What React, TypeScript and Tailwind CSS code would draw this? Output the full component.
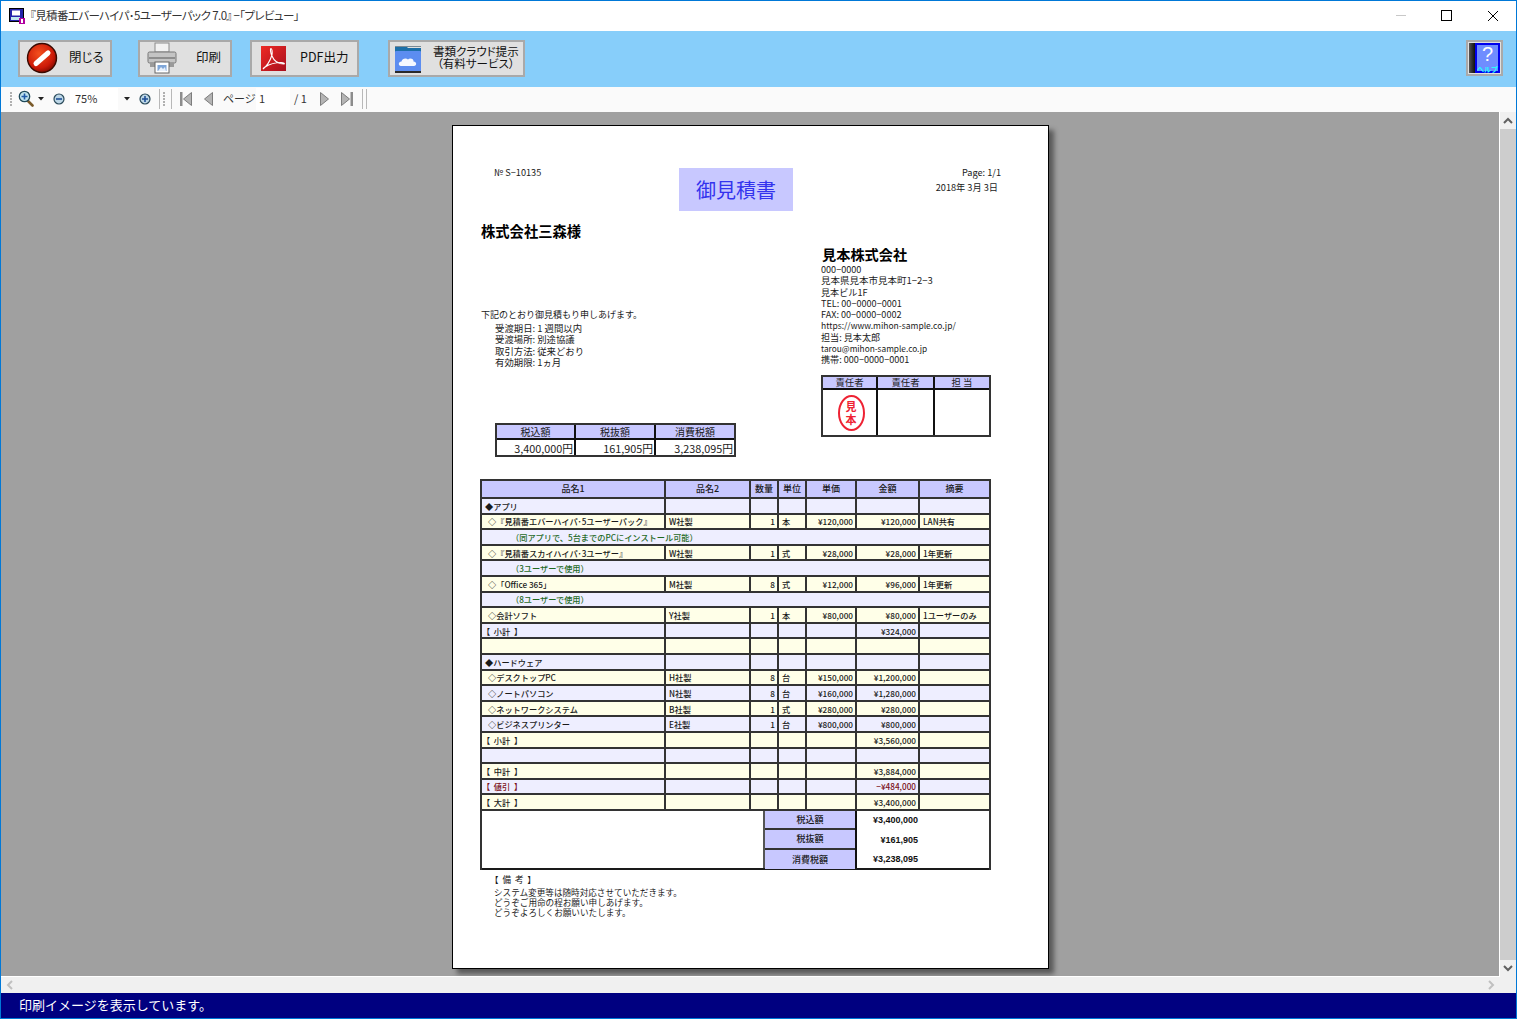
import React from "react";

const FONT = "font-['Noto_Sans_CJK_JP','Noto_Sans',sans-serif]";
const PALT = "[font-feature-settings:'palt']";
const WIDTHS = ["w-[184px]", "w-[85px]", "w-[28px]", "w-[28px]", "w-[50px]", "w-[63px]", "w-[69px]"];

type Row = {
  c: string[];
  tone: "l" | "y";
  note?: boolean;
  red?: boolean;
};

const rows: Row[] = [
  { c: ["◆アプリ", "", "", "", "", "", ""], tone: "l" },
  { c: ["◇『見積番エバーハイパ･5ユーザーパック』", "W社製", "1", "本", "¥120,000", "¥120,000", "LAN共有"], tone: "y" },
  { c: ["（同アプリで、5台までのPCにインストール可能）"], tone: "l", note: true },
  { c: ["◇『見積番スカイハイパ･3ユーザー』", "W社製", "1", "式", "¥28,000", "¥28,000", "1年更新"], tone: "y" },
  { c: ["（3ユーザーで使用）"], tone: "l", note: true },
  { c: ["◇「Office 365」", "M社製", "8", "式", "¥12,000", "¥96,000", "1年更新"], tone: "y" },
  { c: ["（8ユーザーで使用）"], tone: "l", note: true },
  { c: ["◇会計ソフト", "Y社製", "1", "本", "¥80,000", "¥80,000", "1ユーザーのみ"], tone: "y" },
  { c: ["【  小計  】", "", "", "", "", "¥324,000", ""], tone: "l" },
  { c: ["", "", "", "", "", "", ""], tone: "y" },
  { c: ["◆ハードウェア", "", "", "", "", "", ""], tone: "l" },
  { c: ["◇デスクトップPC", "H社製", "8", "台", "¥150,000", "¥1,200,000", ""], tone: "y" },
  { c: ["◇ノートパソコン", "N社製", "8", "台", "¥160,000", "¥1,280,000", ""], tone: "l" },
  { c: ["◇ネットワークシステム", "B社製", "1", "式", "¥280,000", "¥280,000", ""], tone: "y" },
  { c: ["◇ビジネスプリンター", "E社製", "1", "台", "¥800,000", "¥800,000", ""], tone: "l" },
  { c: ["【  小計  】", "", "", "", "", "¥3,560,000", ""], tone: "y" },
  { c: ["", "", "", "", "", "", ""], tone: "l" },
  { c: ["【  中計  】", "", "", "", "", "¥3,884,000", ""], tone: "y" },
  { c: ["【  値引  】", "", "", "", "", "−¥484,000", ""], tone: "l", red: true },
  { c: ["【  大計  】", "", "", "", "", "¥3,400,000", ""], tone: "y" },
];

const CloseIcon = () => (
  <svg width="32" height="32" viewBox="0 0 32 32">
    <defs>
      <radialGradient id="cl" cx="40%" cy="35%" r="70%">
        <stop offset="0%" stopColor="#f4501e" />
        <stop offset="70%" stopColor="#cc1a08" />
        <stop offset="100%" stopColor="#7a0a00" />
      </radialGradient>
    </defs>
    <circle cx="16" cy="16" r="14.5" fill="url(#cl)" stroke="#3a0a00" strokeWidth="1.4" />
    <path d="M10 21.5 L22 11" stroke="#fff" strokeWidth="5" strokeLinecap="round" />
  </svg>
);

const PrinterIcon = () => (
  <svg width="30" height="32" viewBox="0 0 30 32">
    <rect x="8" y="1" width="14" height="9" fill="#f2f2f2" stroke="#8a8a8a" />
    <rect x="1" y="10" width="28" height="11" rx="1.5" fill="#c4c4c4" stroke="#777" />
    <rect x="2" y="15" width="26" height="2" fill="#8e8e8e" />
    <rect x="3" y="21" width="24" height="4" fill="#9a9a9a" />
    <rect x="8" y="20" width="14" height="11" fill="#fff" stroke="#666" />
    <rect x="10.5" y="23" width="9" height="6" fill="#7fa6d8" />
    <path d="M11 29 L14 25 L16 27 L18 25 L19 29 Z" fill="#e8f0fa" />
  </svg>
);

const PdfIcon = () => (
  <svg width="25" height="25" viewBox="0 0 25 25">
    <defs>
      <linearGradient id="pd" x1="0" y1="0" x2="1" y2="1">
        <stop offset="0%" stopColor="#ee2a24" />
        <stop offset="100%" stopColor="#a80f1e" />
      </linearGradient>
    </defs>
    <rect width="25" height="25" fill="url(#pd)" />
    <path
      d="M2 23 C6 20 9 15 11 9 C11.5 6 11 2.5 10 2.5 C9 2.5 9.5 7 11 10 C13 15 17 18 23 18 C24 18 23 16.5 20 16.5 C14 16.5 8 18.5 4 21 C2.5 22 2 23 2 23 Z"
      fill="none"
      stroke="#fff"
      strokeWidth="1.1"
    />
  </svg>
);

const CloudFolderIcon = () => (
  <svg width="26" height="29" viewBox="0 0 26 29">
    <path d="M0 2 H11 L13 4 H26 V9 H0 Z" fill="#1c6fa8" />
    <rect x="0" y="2" width="26" height="1" fill="#7a8a95" />
    <rect x="0" y="7" width="26" height="22" rx="1" fill="#5c8df0" />
    <rect x="0" y="27" width="26" height="2" fill="#2a2a2a" />
    <path
      d="M6 22 C3 22 3 17.5 6.5 17.5 C7 14.5 11 13.5 13 15.5 C15 13.5 19 15 18.5 17.5 C22 17.5 22 22 19 22 Z"
      fill="#f4f8ff"
    />
  </svg>
);

const HelpIcon = () => (
  <div className="relative flex h-[36px] w-[37px] items-center justify-center border-2 border-[#a9a9a9] bg-[#e0e0e0]">
    <div className="flex h-[30px] w-[31px]">
      <div className="w-[6px] bg-gradient-to-r from-[#555555] to-[#111111]" />
      <div className="relative flex-1 border-2 border-[#0000ee] bg-[#6f8dff]">
        <span className="absolute left-0 right-0 top-[-3px] text-center font-['Liberation_Sans',sans-serif] text-[20px] leading-[24px] text-white">?</span>
        <span className={`absolute bottom-[-2px] left-0 right-0 text-center text-[7px] font-bold leading-[8px] text-[#22ffff] ${FONT}`}>ヘルプ</span>
      </div>
    </div>
  </div>
);

const Caret = ({ className = "" }: { className?: string }) => (
  <svg width="6" height="4" viewBox="0 0 6 4" className={className}>
    <path d="M0 0 H6 L3 3.5 Z" fill="#222" />
  </svg>
);

const Grip = ({ className = "" }: { className?: string }) => (
  <div className={`flex flex-col gap-[1px] ${className}`}>
    {[0, 1, 2, 3, 4].map((i) => (
      <span key={i} className="h-[2px] w-[2px] bg-[#b0b0b0]" />
    ))}
  </div>
);

const Sep = ({ className = "" }: { className?: string }) => (
  <span className={`h-[20px] w-[1px] bg-[#b8b8b8] ${className}`} />
);

const Magnifier = () => (
  <svg width="16" height="17" viewBox="0 0 16 17">
    <path d="M9.5 10.5 L14.5 15.5" stroke="#7a5a2a" strokeWidth="2.6" strokeLinecap="round" />
    <circle cx="6.5" cy="6.5" r="5.2" fill="#bfe3ee" stroke="#1f4a5a" strokeWidth="1.3" />
    <path d="M3.5 6.5 H9.5 M6.5 3.5 V9.5" stroke="#1f5aa8" strokeWidth="1.6" />
  </svg>
);

const RoundBtn = ({ plus }: { plus?: boolean }) => (
  <svg width="12" height="12" viewBox="0 0 12 12">
    <circle cx="6" cy="6" r="5" fill="#bcd6e6" stroke="#2a4a5a" strokeWidth="1.2" />
    <path d={plus ? "M3 6 H9 M6 3 V9" : "M3 6 H9"} stroke="#1f4f96" strokeWidth="1.6" />
  </svg>
);

const Arrow = ({ dir, bar }: { dir: "l" | "r"; bar?: boolean }) => (
  <svg width={bar ? 12 : 9} height="14" viewBox={bar ? "0 0 12 14" : "0 0 9 14"}>
    {dir === "l" ? (
      bar ? (
        <>
          <rect x="0" y="0" width="2.5" height="14" fill="#8c8c8c" />
          <path d="M11.5 0.5 V13.5 L3.5 7 Z" fill="#b4b4b4" stroke="#7c7c7c" />
        </>
      ) : (
        <path d="M8.5 0.5 V13.5 L0.5 7 Z" fill="#b4b4b4" stroke="#7c7c7c" />
      )
    ) : bar ? (
      <>
        <rect x="9.5" y="0" width="2.5" height="14" fill="#8c8c8c" />
        <path d="M0.5 0.5 V13.5 L8.5 7 Z" fill="#b4b4b4" stroke="#7c7c7c" />
      </>
    ) : (
      <path d="M0.5 0.5 V13.5 L8.5 7 Z" fill="#b4b4b4" stroke="#7c7c7c" />
    )}
  </svg>
);

const ToolButton = ({ width, icon, children, textLeft }: { width: string; icon: React.ReactNode; children: React.ReactNode; textLeft: string }) => (
  <div className={`flex h-[37px] items-center border-2 border-[#a9a9a9] bg-[#e0e0e0] ${width}`}>
    {icon}
    <div className={`pb-[2px] leading-[12px] text-[#111] ${PALT} ${textLeft}`}>{children}</div>
  </div>
);

const TableRow = ({ row }: { row: Row }) => {
  const bg = row.tone === "l" ? "bg-[#eeeeff]" : "bg-[#ffffe8]";
  if (row.note) {
    return (
      <div className={`flex h-[15.6px] items-center border-b-2 border-[#333] pl-[29px] text-[8.2px] font-medium leading-[10px] text-[#1f6a1f] ${bg}`}>
        {row.c[0]}
      </div>
    );
  }
  return (
    <div className={`flex h-[15.6px] border-b-2 border-[#333] text-[8.2px] font-medium leading-[10px] ${bg}`}>
      {row.c.map((t, i) => {
        const right = i === 2 || i === 4 || i === 5;
        const red = row.red && (i === 0 || i === 5);
        let pad = "pl-[3px]";
        if (right) pad = "justify-end pr-[2px]";
        else if (i === 0) pad = t.startsWith("◇") ? "pl-[6px]" : t.startsWith("◆") ? "pl-[3px]" : "pl-0";
        return (
          <div
            key={i}
            className={`flex items-center overflow-hidden whitespace-pre border-[#333] ${i < 6 ? "border-r-2" : ""} ${WIDTHS[i]} ${pad} ${red ? "text-[#7a1020]" : "text-[#1a1a1a]"}`}
          >
            {t}
          </div>
        );
      })}
    </div>
  );
};

const App = () => {
  return (
    <div className={`flex h-[1019px] w-[1517px] flex-col overflow-hidden border border-[#0078d7] bg-white ${FONT}`}>
      {/* title bar */}
      <div className="flex h-[30px] shrink-0 items-center bg-white pb-[1px]">
        <svg width="16" height="16" viewBox="0 0 16 16" className="ml-[8px]">
          <rect width="14" height="13" x="0.5" y="0.5" fill="#2222aa" stroke="#000" />
          <rect x="3" y="2.5" width="8" height="5" fill="#fff" />
          <rect x="2" y="9" width="9" height="3" fill="#bfe6ee" />
          <rect x="10" y="10" width="6" height="6" fill="#b000a0" />
          <rect x="12" y="11" width="2" height="4" fill="#fff" />
        </svg>
        <span className={`ml-[5px] text-[11.5px] tracking-[-0.6px] text-[#333] ${PALT}`}>『見積番エバーハイパ･5ユーザーパック 7.0』 −「プレビュー」</span>
        <div className="ml-auto flex items-center">
          <span className="mr-[35px] h-[1px] w-[10px] bg-[#c8c8c8]" />
          <span className="mr-[35px] h-[11px] w-[11px] border-[1.5px] border-black" />
          <svg width="12" height="12" viewBox="0 0 12 12" className="mr-[17px]">
            <path d="M1 1 L11 11 M11 1 L1 11" stroke="#000" strokeWidth="1" />
          </svg>
        </div>
      </div>

      {/* button bar */}
      <div className="flex h-[56px] shrink-0 items-center bg-[#87cefa] pb-[2px] pl-[17px]">
        <ToolButton width="w-[94px]" icon={<div className="ml-[6px]"><CloseIcon /></div>} textLeft="ml-[11px] text-[12.5px]">閉じる</ToolButton>
        <div className="ml-[26px]">
          <ToolButton width="w-[94px]" icon={<div className="ml-[7px]"><PrinterIcon /></div>} textLeft="ml-[19px] text-[12.5px]">印刷</ToolButton>
        </div>
        <div className="ml-[18px]">
          <ToolButton width="w-[109px]" icon={<div className="ml-[9px]"><PdfIcon /></div>} textLeft="ml-[14px] text-[12.5px]">PDF出力</ToolButton>
        </div>
        <div className="ml-[29px]">
          <ToolButton
            width="w-[137px]"
            icon={<div className="ml-[5px]"><CloudFolderIcon /></div>}
            textLeft="ml-[12px] text-center text-[11.5px]"
          >
            <div className="whitespace-nowrap leading-[12px]">書類クラウド提示</div>
            <div className="whitespace-nowrap leading-[12px]">（有料サービス）</div>
          </ToolButton>
        </div>
        <div className="ml-auto mr-[13px]">
          <HelpIcon />
        </div>
      </div>

      {/* preview strip */}
      <div className={`flex h-[25px] shrink-0 items-center bg-[#fafafa] pb-[2px] text-[11px] text-[#333] ${PALT}`}>
        <Grip className="ml-[9px]" />
        <div className="ml-[6px]"><Magnifier /></div>
        <Caret className="ml-[4px]" />
        <div className="ml-[9px]"><RoundBtn /></div>
        <div className="ml-[5px] flex h-[22px] w-[48px] items-center bg-white pl-[5px]">75%</div>
        <Caret className="ml-[6px]" />
        <div className="ml-[9px]"><RoundBtn plus /></div>
        <Sep className="ml-[8px]" />
        <Grip className="ml-[3px]" />
        <Sep className="ml-[6px]" />
        <div className="ml-[8px]"><Arrow dir="l" bar /></div>
        <div className="ml-[12px]"><Arrow dir="l" /></div>
        <span className="ml-[10px] w-[29px] whitespace-nowrap">ページ</span>
        <div className="ml-[4px] flex h-[22px] w-[34px] items-center bg-white pl-[3px]">1</div>
        <span className="ml-[4px] w-[13px] whitespace-nowrap">/ 1</span>
        <div className="ml-[13px]"><Arrow dir="r" /></div>
        <div className="ml-[12px]"><Arrow dir="r" bar /></div>
        <Sep className="ml-[9px]" />
        <Sep className="ml-[3px]" />
      </div>

      {/* preview area */}
      <div className="flex min-h-0 flex-1">
        <div className="flex-1 overflow-hidden border-b border-r border-white bg-[#a0a0a0] pl-[451px] pt-[13px]">
          <div className="h-[844px] w-[597px] border border-black bg-white shadow-[5px_5px_5px_rgba(0,0,0,0.45)]">
            {/* header row */}
            <div className="mt-[42px] flex h-[43px] text-[9.2px] leading-[10px] text-[#1a1a1a]">
              <div className="ml-[41px] w-[185px] -translate-y-[1px]">№ S−10135</div>
              <div className="flex w-[114px] items-center justify-center bg-[#c8c8ff] text-[20px] leading-[24px] text-[#3333ee]">御見積書</div>
              <div className="flex-1 -translate-y-[1px] pr-[47px] text-right">
                <div>Page: 1/1</div>
                <div className="mt-[5px] pr-[3px]">2018年 3月 3日</div>
              </div>
            </div>

            {/* address + summary */}
            <div className="ml-[28px] flex h-[268px] text-[#1a1a1a]">
              <div className="w-[340px]">
                <div className="mt-[12px] whitespace-nowrap text-[14.3px] font-bold leading-[16px] text-black">株式会社三森様</div>
                <div className="mt-[70px] text-[9px] leading-[11px]">下記のとおり御見積もり申しあげます。</div>
                <div className="ml-[14px] mt-[3px] text-[9.4px] leading-[11.4px]">
                  <div>受渡期日: 1 週間以内</div>
                  <div>受渡場所: 別途協議</div>
                  <div>取引方法: 従来どおり</div>
                  <div>有効期限: 1ヵ月</div>
                </div>
                <div className="ml-[14px] mt-[54px] w-[241px] border-2 border-[#333]">
                  <div className="flex h-[15px] border-b-2 border-[#111] bg-[#c8c8ff] text-center text-[10px] leading-[14px]">
                    <div className="w-[79px] border-r-2 border-[#111]">税込額</div>
                    <div className="w-[80px] border-r-2 border-[#111]">税抜額</div>
                    <div className="flex-1">消費税額</div>
                  </div>
                  <div className="flex h-[15px] text-right text-[10.8px] leading-[16px]">
                    <div className="w-[79px] border-r-2 border-[#111] pr-[1px]">3,400,000円</div>
                    <div className="w-[80px] border-r-2 border-[#111] pr-[1px]">161,905円</div>
                    <div className="flex-1 pr-[1px]">3,238,095円</div>
                  </div>
                </div>
              </div>
              <div className="w-[170px]">
                <div className="ml-[1px] mt-[35px] whitespace-nowrap text-[14.2px] font-bold leading-[16px] text-black">見本株式会社</div>
                <div className="mt-[2px] text-[9.1px] leading-[11.25px]">
                  <div>000−0000</div>
                  <div className="text-[9.5px]">見本県見本市見本町1−2−3</div>
                  <div>見本ビル1F</div>
                  <div>TEL: 00−0000−0001</div>
                  <div>FAX: 00−0000−0002</div>
                  <div className="text-[8.5px]">https://www.mihon-sample.co.jp/</div>
                  <div>担当: 見本太郎</div>
                  <div className="text-[8.3px]">tarou@mihon-sample.co.jp</div>
                  <div>携帯: 000−0000−0001</div>
                </div>
                <div className="mt-[10px] h-[62px] w-[170px] border-2 border-[#333]">
                  <div className="flex h-[13px] border-b-2 border-[#111] bg-[#c8c8ff] text-center text-[9.4px] leading-[11px]">
                    <div className="w-[55px] border-r-2 border-[#111]">責任者</div>
                    <div className="w-[57px] border-r-2 border-[#111]">責任者</div>
                    <div className="flex-1">担 当</div>
                  </div>
                  <div className="flex h-[45px]">
                    <div className="flex w-[55px] items-center justify-center border-r-2 border-[#111] pl-[3px]">
                      <div className="flex h-[36px] w-[27px] flex-col items-center justify-center rounded-[50%] border-2 border-[#ee2233] text-[11px] font-bold leading-[13px] text-[#ee2233]">
                        <span>見</span>
                        <span>本</span>
                      </div>
                    </div>
                    <div className="w-[57px] border-r-2 border-[#111]" />
                    <div className="flex-1" />
                  </div>
                </div>
              </div>
            </div>

            {/* main table */}
            <div className="ml-[27px] w-[511px] border-x-2 border-t-2 border-[#333]">
              <div className="flex h-[18px] border-b-2 border-[#333] bg-[#c8c8ff] text-center text-[9px] font-medium leading-[16px] text-[#1a1a1a]">
                {["品名1", "品名2", "数量", "単位", "単価", "金額", "摘要"].map((h, i) => (
                  <div key={h} className={`${WIDTHS[i]} ${i < 6 ? "border-r-2 border-[#333]" : ""}`}>{h}</div>
                ))}
              </div>
              {rows.map((r, i) => (
                <TableRow key={i} row={r} />
              ))}
              <div className="flex h-[59px] border-b-2 border-[#1a1a1a] bg-white">
                <div className="w-[283px] border-r-2 border-[#555]" />
                <div className="w-[92px] border-r-2 border-[#111]">
                  {["税込額", "税抜額", "消費税額"].map((t, i) => (
                    <div
                      key={t}
                      className={`flex h-[19.4px] items-center justify-center bg-[#c8c8ff] text-[9px] font-medium text-[#1a1a1a] ${i < 2 ? "border-b-2 border-[#333]" : ""}`}
                    >
                      {t}
                    </div>
                  ))}
                </div>
                <div className="w-[63px] pr-[2px] text-right font-['Liberation_Sans',sans-serif] text-[9px] font-bold text-[#111]">
                  {["¥3,400,000", "¥161,905", "¥3,238,095"].map((t) => (
                    <div key={t} className="flex h-[19.4px] items-center justify-end pt-[1px]">{t}</div>
                  ))}
                </div>
              </div>
            </div>

            {/* remarks */}
            <div className="ml-[41px] mt-[4px] text-[8.6px] leading-[10px] text-[#1a1a1a]">
              <div className="mb-[3px] mt-[3px] -ml-[4px] whitespace-pre">【  備  考  】</div>
              <div>システム変更等は随時対応させていただきます。</div>
              <div>どうぞご用命の程お願い申しあげます。</div>
              <div>どうぞよろしくお願いいたします。</div>
            </div>
          </div>
        </div>

        {/* vertical scrollbar */}
        <div className="flex w-[16px] flex-col bg-[#f0f0f0]">
          <div className="flex h-[17px] items-center justify-center">
            <svg width="10" height="7" viewBox="0 0 10 7"><path d="M1 6 L5 2 L9 6" fill="none" stroke="#606060" strokeWidth="2" /></svg>
          </div>
          <div className="flex-1 bg-[#cdcdcd]" />
          <div className="flex h-[17px] items-center justify-center">
            <svg width="10" height="7" viewBox="0 0 10 7"><path d="M1 1 L5 5 L9 1" fill="none" stroke="#606060" strokeWidth="2" /></svg>
          </div>
        </div>
      </div>

      {/* horizontal scrollbar */}
      <div className="flex h-[16px] shrink-0 items-center justify-between bg-[#f0f0f0] px-[5px] pr-[21px]">
        <svg width="7" height="10" viewBox="0 0 7 10"><path d="M6 1 L2 5 L6 9" fill="none" stroke="#c0c0c0" strokeWidth="2" /></svg>
        <svg width="7" height="10" viewBox="0 0 7 10"><path d="M1 1 L5 5 L1 9" fill="none" stroke="#c0c0c0" strokeWidth="2" /></svg>
      </div>

      {/* status bar */}
      <div className="flex h-[25px] shrink-0 items-center bg-[#000080] pb-[2px] pl-[18px] text-[13px] text-white">
        印刷イメージを表示しています。
      </div>
    </div>
  );
};

export default App;
